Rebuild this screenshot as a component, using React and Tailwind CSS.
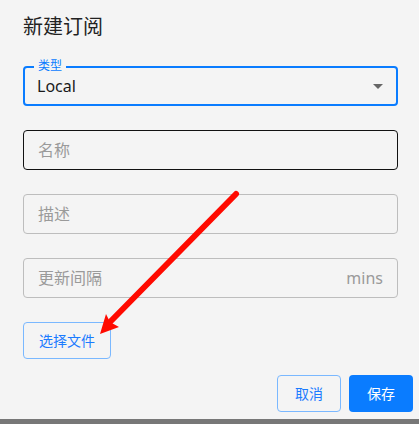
import React from 'react';

const font = { fontFamily: '"Noto Sans", "Noto Sans CJK SC", sans-serif' };

function Field({ placeholder, suffix, borderClass }) {
  return (
    <div className={`h-[40px] w-[375px] rounded-[4px] border ${borderClass} flex items-center justify-between px-[14px]`}>
      <span className="text-[16px] text-[#9a9a9a]">{placeholder}</span>
      {suffix && <span className="text-[16px] text-[#9a9a9a]">{suffix}</span>}
    </div>
  );
}

export default function App() {
  return (
    <div className="relative w-[419px] h-[424px] bg-[#f4f4f4] flex flex-col overflow-hidden" style={font}>
      <div className="flex-1 flex flex-col pl-[23px] pt-[13px]">
        <h2 className="text-[20px] leading-[28px] text-[#222]">新建订阅</h2>

        {/* type select */}
        <div className="relative mt-[25px] h-[40px] w-[375px] rounded-[4px] border-2 border-[#0a7cff] flex items-center justify-between pl-[12px] pr-[12px]">
          <span className="absolute -top-[9px] left-[9px] px-[4px] bg-[#f4f4f4] text-[12px] leading-[14px] text-[#0a7cff]">类型</span>
          <span className="text-[16px] text-[#1a1a1a]">Local</span>
          <span className="w-0 h-0 border-l-[5px] border-r-[5px] border-t-[5px] border-l-transparent border-r-transparent border-t-[#666] mr-[1px]" />
        </div>

        <div className="mt-[24px]"><Field placeholder="名称" borderClass="border-[#111]" /></div>
        <div className="mt-[24px]"><Field placeholder="描述" borderClass="border-[#bdbdbd]" /></div>
        <div className="mt-[24px]"><Field placeholder="更新间隔" suffix="mins" borderClass="border-[#bdbdbd]" /></div>

        <button className="mt-[24px] w-[88px] h-[37px] rounded-[4px] border border-[#7ab8ff] text-[14px] text-[#1a7bff]">选择文件</button>

        <div className="mt-[16px] flex justify-end gap-[8px] pr-[6px]">
          <button className="w-[64px] h-[37px] rounded-[4px] border border-[#7ab8ff] text-[14px] text-[#1a7bff]">取消</button>
          <button className="w-[64px] h-[37px] rounded-[4px] bg-[#0a7cff] text-[14px] text-white">保存</button>
        </div>
      </div>
      <div className="h-[5px] bg-[#777]" />

      {/* red annotation arrow */}
      <svg className="absolute left-0 top-0 pointer-events-none" width="419" height="424">
        <line x1="236" y1="194" x2="110" y2="322" stroke="#ff0a00" strokeWidth="6" strokeLinecap="round" />
        <polygon points="100,334 106,314 110,322 119,327" fill="#ff0a00" />
      </svg>
    </div>
  );
}
